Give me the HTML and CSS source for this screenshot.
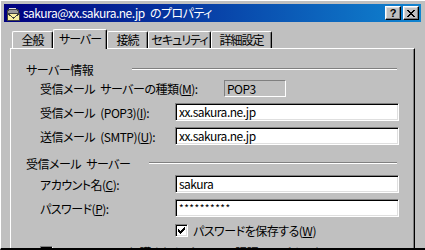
FILE: index.html
```html
<!DOCTYPE html>
<html lang="ja">
<head>
    <meta charset="utf-8">
    <title>sakura@xx.sakura.ne.jp のプロパティ</title>
    <link rel="stylesheet" href="styles.css">
</head>
<body>
    <div class="window">
        <div class="titlebar">
            <svg class="title-icon" width="16" height="16" viewBox="0 0 16 16" shape-rendering="crispEdges">
                <path d="M3 4h9v1h1v3h-11v-3h1z" fill="#9a9a9a" stroke="#404040" stroke-width="1"/>
                <path d="M4 3h7v1h-7z" fill="#e0e0e0"/>
                <rect x="2.5" y="8.5" width="12" height="7" fill="#f8f0a0" stroke="#404040"/>
                <path d="M3 9l5.5 4l5.5-4" fill="none" stroke="#404040"/>
            </svg>
            <span class="title-text">sakura@xx.sakura.ne.jp のプロパティ</span>
            <div class="caption-buttons">
                <div class="caption-btn help">?</div>
                <div class="caption-btn close">
                    <svg width="8" height="7" viewBox="0 0 8 7" shape-rendering="crispEdges">
                        <path d="M0 0h2v1h-2zM6 0h2v1h-2zM1 1h2v1h-2zM5 1h2v1h-2zM2 2h4v1h-4zM3 3h2v1h-2zM2 4h4v1h-4zM1 5h2v1h-2zM5 5h2v1h-2zM0 6h2v1h-2zM6 6h2v1h-2z" fill="#000"/>
                    </svg>
                </div>
            </div>
        </div>

        <div class="dialog">
            <div class="tabs">
                <div class="tab">全般</div>
                <div class="tab active">サーバー</div>
                <div class="tab">接続</div>
                <div class="tab">セキュリティ</div>
                <div class="tab">詳細設定</div>
            </div>

            <div class="panel">
                <div class="group-title">
                    <span class="group-name name-info">サーバー情報</span>
                    <span class="etched"></span>
                </div>
                <div class="row first">
                    <span class="label label-wide">受信メール サーバーの種類(<u>M</u>):</span>
                    <div class="static-field">POP3</div>
                </div>
                <div class="row">
                    <span class="label">受信メール (POP3)(<u>I</u>):</span>
                    <div class="edit">xx.sakura.ne.jp</div>
                </div>
                <div class="row">
                    <span class="label">送信メール (SMTP)(<u>U</u>):</span>
                    <div class="edit">xx.sakura.ne.jp</div>
                </div>

                <div class="group-title second">
                    <span class="group-name name-server">受信メール サーバー</span>
                    <span class="etched"></span>
                </div>
                <div class="row first">
                    <span class="label">アカウント名(<u>C</u>):</span>
                    <div class="edit">sakura</div>
                </div>
                <div class="row">
                    <span class="label">パスワード(<u>P</u>):</span>
                    <div class="edit password">**********</div>
                </div>
                <div class="check-row save-pass">
                    <span class="checkbox">
                        <svg width="7" height="7" viewBox="0 0 7 7" shape-rendering="crispEdges">
                            <path d="M6 0h1v1h-1zM5 1h2v1h-2zM0 2h1v1h-1zM4 2h3v1h-3zM0 3h2v1h-2zM3 3h3v1h-3zM0 4h5v1h-5zM1 5h3v1h-3zM2 6h1v1h-1z" fill="#000"/>
                        </svg>
                    </span>
                    <span>パスワードを保存する(<u>W</u>)</span>
                </div>
                <div class="check-row spa">
                    <span class="checkbox"></span>
                    <span>セキュリティで保護されたパスワード認証でログオンする(<u>S</u>)</span>
                </div>
            </div>
        </div>
    </div>
</body>
</html>
```

FILE: styles.css
```css
body {
    margin: 0;
    background-color: #c0c0c0;
    font-family: "Noto Sans CJK JP", "Liberation Sans", sans-serif;
    font-size: 12px;
    font-feature-settings: "palt";
    letter-spacing: -0.5px;
    word-spacing: 3px;
    color: #000;
}

.window {
    width: 425px;
    height: 250px;
    box-sizing: border-box;
    padding: 3px 4px 0 3px;
    border-left: 1px solid #fff;
    border-top: 1px solid #fff;
    border-bottom: 2px solid #000;
    background-color: #c0c0c0;
    overflow: hidden;
}

/* title bar */
.titlebar {
    display: flex;
    align-items: center;
    height: 18px;
    padding: 0 2px 0 1px;
    background: linear-gradient(to right, #000080, #1084d0);
    color: #fff;
}

.title-icon {
    flex-shrink: 0;
    margin-right: 2px;
}

.title-text {
    line-height: 18px;
    white-space: nowrap;
}

.caption-buttons {
    display: flex;
    gap: 2px;
    margin-left: auto;
}

.caption-btn {
    display: flex;
    align-items: center;
    justify-content: center;
    width: 16px;
    height: 14px;
    box-sizing: border-box;
    background-color: #c0c0c0;
    border-top: 1px solid #fff;
    border-left: 1px solid #fff;
    border-right: 1px solid #000;
    border-bottom: 1px solid #000;
    box-shadow: inset -1px -1px #808080, inset 1px 1px #dfdfdf;
    color: #000;
    font-family: "Liberation Sans", sans-serif;
    font-weight: bold;
    font-size: 11px;
    line-height: 12px;
    letter-spacing: 0;
}

/* tabs */
.dialog {
    padding: 7px 0 0 6px;
}

.tabs {
    display: flex;
    align-items: flex-end;
    height: 19px;
    padding-left: 2px;
}

.tab {
    display: flex;
    justify-content: center;
    flex-shrink: 0;
    height: 17px;
    box-sizing: border-box;
    border-top: 1px solid #fff;
    border-left: 1px solid #fff;
    border-right: 1px solid #000;
    border-radius: 2px 2px 0 0;
    box-shadow: inset -1px 0 #808080;
    background-color: #c0c0c0;
    line-height: 15px;
    letter-spacing: -1px;
    white-space: nowrap;
}

.tab:nth-child(1) { width: 41px; }
.tab:nth-child(3) { width: 41px; }
.tab:nth-child(4) { width: 63px; }
.tab:nth-child(5) { width: 61px; }

.tab.active {
    position: relative;
    z-index: 1;
    width: 54px;
    height: 20px;
    margin-bottom: -1px;
    line-height: 17px;
}

/* tab page */
.panel {
    width: 405px;
    height: 220px;
    box-sizing: border-box;
    padding: 12px 17px 0 15px;
    border-top: 1px solid #fff;
    border-left: 1px solid #fff;
    border-right: 1px solid #000;
    box-shadow: inset -1px 0 #808080;
}

.group-title {
    display: flex;
    align-items: center;
    height: 16px;
}

.group-title.second {
    margin-top: 10px;
}

.group-name {
    flex-shrink: 0;
    white-space: nowrap;
}

.name-info { width: 106px; }
.name-server { width: 123px; }

.etched {
    flex: 1;
    height: 0;
    border-top: 1px solid #808080;
    border-bottom: 1px solid #fff;
}

.row {
    display: flex;
    align-items: center;
    height: 18px;
    margin: 6px 0 0 14px;
}

.row.first {
    margin-top: 2px;
}

.group-title.second + .row.first {
    margin-top: 4px;
}

.label {
    flex-shrink: 0;
    width: 135px;
    white-space: nowrap;
}

.label-wide {
    width: 184px;
}

.static-field {
    width: 62px;
    height: 17px;
    box-sizing: border-box;
    padding-left: 2px;
    border-top: 1px solid #808080;
    border-left: 1px solid #808080;
    border-right: 1px solid #fff;
    border-bottom: 1px solid #fff;
    line-height: 15px;
}

.edit {
    flex-shrink: 0;
    width: 224px;
    height: 18px;
    box-sizing: border-box;
    padding-left: 3px;
    border-top: 1px solid #808080;
    border-left: 1px solid #808080;
    border-right: 1px solid #fff;
    border-bottom: 1px solid #fff;
    box-shadow: inset 1px 1px #000, inset -1px -1px #dfdfdf;
    background-color: #fff;
    line-height: 16px;
    white-space: nowrap;
}

.edit.password {
    font-size: 10px;
    letter-spacing: 0.5px;
}

/* check boxes */
.check-row {
    display: flex;
    align-items: center;
    gap: 5px;
    height: 13px;
    white-space: nowrap;
}

.check-row.save-pass {
    margin: 7px 0 0 149px;
}

.check-row.spa {
    margin: 9px 0 0 14px;
}

.checkbox {
    display: flex;
    align-items: center;
    justify-content: center;
    flex-shrink: 0;
    width: 13px;
    height: 13px;
    box-sizing: border-box;
    border-top: 1px solid #808080;
    border-left: 1px solid #808080;
    border-right: 1px solid #fff;
    border-bottom: 1px solid #fff;
    box-shadow: inset 1px 1px #000, inset -1px -1px #dfdfdf;
    background-color: #fff;
}
```
